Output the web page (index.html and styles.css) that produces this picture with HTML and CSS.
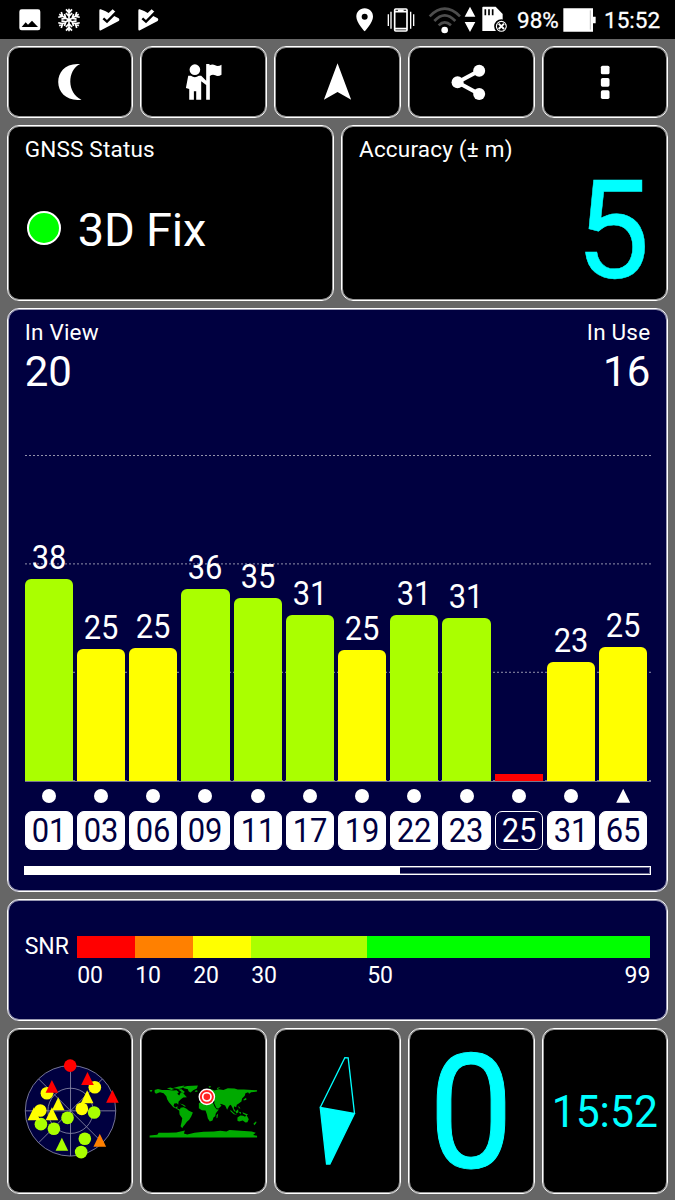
FILE: index.html
```
<!DOCTYPE html>
<html lang="en">
<head>
    <meta charset="UTF-8">
    <meta name="viewport" content="width=device-width, initial-scale=1.0">
    <title>GNSS Status</title>
    <link rel="stylesheet" href="styles.css">
</head>
<body>

    <header class="statusbar">
        <div class="notifications">
            <svg width="22" height="22" viewBox="56 26 66 66"><rect x="57" y="27" width="63" height="63" rx="7" fill="#fff"/><path d="M64 80 L76 66 L83 73 L95 61 L113 80 Z" fill="#000"/></svg>
            <svg width="26" height="24" viewBox="167 22 78 72" fill="none" stroke="#fff" stroke-width="5">
                <g id="arm"><path d="M206 58 V24 M197 26 L206 36 L215 26 M197 37 L206 47 L215 37"/></g>
                <use href="#arm" transform="rotate(60 206 58)"/>
                <use href="#arm" transform="rotate(120 206 58)"/>
                <use href="#arm" transform="rotate(180 206 58)"/>
                <use href="#arm" transform="rotate(240 206 58)"/>
                <use href="#arm" transform="rotate(300 206 58)"/>
            </svg>
            <svg class="check" width="21" height="22" viewBox="296 26 63 66"><g id="chk"><path d="M301 27 L316 33 L325 38 L337 27 L345 34 L336 44 L346 49 L355 54 Q359 58 355 62 L302 90 Q297 92 297 87 V31 Q297 26 301 27 Z" fill="#fff"/><path d="M309 54 L320 64 L347 37" fill="none" stroke="#000" stroke-width="7"/></g></svg>
            <svg class="check" width="21" height="22" viewBox="296 26 63 66"><use href="#chk"/></svg>
        </div>
        <div class="system">
            <svg class="pin" width="18" height="24" viewBox="62 24 54 72"><path fill="#fff" fill-rule="evenodd" d="M88 25 C73 25 63 36 63 50 C63 67 88 94 88 94 C88 94 113 67 113 50 C113 36 103 25 88 25 Z M88 41 A9 9 0 1 1 88 59 A9 9 0 1 1 88 41 Z"/></svg>
            <svg class="vibrate" width="28" height="24" viewBox="154 24 84 72" fill="none" stroke="#fff"><rect x="177" y="27" width="37" height="66" rx="3" stroke-width="5"/><path d="M177 35 H214 M187 31 H204 M177 86 H214" stroke-width="5"/><path d="M166 35 V86 M158 43 V78 M225 35 V86 M234 43 V78" stroke-width="4"/></svg>
            <svg class="wifi" width="34" height="28" viewBox="276 16 102 84" fill="none" stroke="#4d4d4d" stroke-width="8"><path d="M281 47 Q326 1 372 47"/><path d="M295 61 Q326 27 358 61"/><path d="M308 74 Q326 56 345 74"/><circle cx="326" cy="88" r="10" fill="#fff" stroke="none"/></svg>
            <svg class="arrows" width="12" height="27" viewBox="386 19 34 81" fill="#fff"><path d="M403 21 L419 51 H387 Z M387 67 H419 L403 97 Z"/></svg>
            <svg class="sdcard" width="27" height="27" viewBox="440 19 81 81"><path d="M443 21 H481 L502 43 V94 H441 V23 Z" fill="#fff"/><path d="M450 29 V47 M461 29 V47 M472 29 V47" stroke="#000" stroke-width="5"/><circle cx="498" cy="80" r="19" fill="#fff" stroke="#000" stroke-width="5"/><circle cx="498" cy="80" r="13" fill="#000"/><path d="M490 72 L506 88 M506 72 L490 88" stroke="#fff" stroke-width="6"/></svg>
            <span class="percent">98%</span>
            <svg class="battery" width="33" height="24" viewBox="686 23 99 72" fill="#fff"><path d="M687 24 H776 V49 H784 V69 H776 V94 H687 Z"/><path d="M768 30 V88" stroke="#999" stroke-width="2"/></svg>
            <span class="clock">15:52</span>
        </div>
    </header>

    <main class="dashboard">
        <nav class="row five">
            <button class="card"><svg viewBox="20 138 381 216"><path fill="#fff" d="M240 192 C196 188 174 215 174 246 C174 279 202 305 244 299 C200 280 200 211 240 192 Z"/></svg></button>
            <button class="card"><svg viewBox="420 138 381 216" fill="#fff"><circle cx="585" cy="209" r="16"/><path d="M565 227 H573 Q585 236 597 227 H604 L619 242 V192 H629 V196 Q638 191 646 196 Q655 200 665 194 V224 Q655 231 646 226 Q638 222 630 228 V299 H619 V255 L604 244 V299 H589 V274 H582 V299 H568 V267 L558 264 Z"/></svg></button>
            <button class="card"><svg viewBox="822 138 381 216"><path fill="#fff" d="M1013 190 L1054 299 L1013 276 L972 299 Z"/></svg></button>
            <button class="card"><svg viewBox="218 138 381 216" fill="#fff"><path d="M432 212 L367 247 L432 282" fill="none" stroke="#fff" stroke-width="12"/><circle cx="432" cy="212" r="18"/><circle cx="367" cy="247" r="18"/><circle cx="432" cy="282" r="18"/></svg></button>
            <button class="card"><svg viewBox="619 138 381 216" fill="#fff"><rect x="796" y="197" width="26" height="26" rx="5"/><rect x="796" y="234" width="26" height="26" rx="5"/><rect x="796" y="271" width="26" height="26" rx="5"/></svg></button>
        </nav>

        <section class="row two">
            <div class="card info">
                <div class="label">GNSS Status</div>
                <div class="fix"><span class="led"></span>3D Fix</div>
            </div>
            <div class="card info">
                <div class="label">Accuracy (± m)</div>
                <div class="accuracy">5</div>
            </div>
        </section>

        <section class="card navy signals">
            <div class="counts">
                <div><div class="label">In View</div><div class="count">20</div></div>
                <div class="right"><div class="label">In Use</div><div class="count">16</div></div>
            </div>
            <div class="chart" id="chart"></div>
            <div class="ids" id="ids"></div>
            <div class="scroll"><div class="thumb"></div></div>
        </section>

        <section class="card navy snr">
            <span class="snr-title">SNR</span>
            <div class="scale">
                <div class="red"></div><div class="orange"></div><div class="yellow"></div><div class="lime"></div><div class="green"></div>
                <span>00</span><span>10</span><span>20</span><span>30</span><span class="ends">50<b>99</b></span>
            </div>
        </section>

        <section class="row five">
            <div class="card">
                <svg viewBox="20 24 381 497">
                    <g fill="none" stroke="#8c8ca8" stroke-width="2.5">
                        <circle cx="211" cy="272" r="136" fill="#000040"/>
                        <circle cx="211" cy="272" r="68"/>
                        <path d="M211 136 V408 M75 272 H347 M115 176 L307 368 M115 368 L307 176"/>
                    </g>
                    <g id="sky"></g>
                </svg>
            </div>
            <div class="card">
                <svg viewBox="16 24 381 497">
                    <g fill="#0a0">
                        <path d="M45 210 L53 209 L52 214 L46 214 Z M60 209 L70 206 L82 209 L100 209 L116 211 L126 210 L133 216 L128 221 L134 226 L139 216 L145 218 L154 228 L157 231 L146 232 L139 237 L132 244 L131 254 L127 249 L119 250 L117 257 L122 262 L129 258 L128 265 L135 267 L140 274 L134 272 L126 266 L116 261 L109 253 L103 246 L98 238 L95 228 L87 219 L76 216 L64 221 L60 216 Z"/>
                        <path d="M97 204 L108 202 L119 206 L110 209 Z M116 203 L132 199 L150 196 L143 203 L133 206 Z M131 208 L141 207 L151 215 L146 219 L138 213 Z M145 200 L158 197 L190 196 L187 205 L176 210 L168 217 L162 213 L160 207 L148 204 Z M180 212 L187 210 L190 213 L184 215 Z"/>
                        <path d="M136 250 L146 253 L154 258 L151 260 Z M138 263 L147 261 L156 266 L163 272 L175 277 L170 289 L164 299 L157 305 L151 313 L146 319 L143 324 L138 318 L141 306 L143 294 L135 283 L134 274 Z"/>
                        <path d="M193 249 L201 244 L214 243 L226 247 L236 249 L240 259 L246 267 L253 268 L244 279 L242 288 L237 292 L234 301 L226 304 L220 295 L217 282 L213 271 L202 270 L193 264 Z M246 285 L251 280 L249 293 L246 294 Z"/>
                        <path d="M195 240 L198 232 L193 229 L197 222 L205 227 L210 216 L221 207 L230 207 L240 211 L252 207 L267 209 L280 204 L300 205 L310 208 L328 208 L368 210 L368 214 L350 216 L344 221 L341 216 L333 219 L331 227 L323 235 L321 244 L313 250 L307 254 L305 261 L299 258 L298 265 L304 273 L299 274 L294 263 L289 254 L284 257 L278 269 L272 256 L263 252 L256 251 L261 257 L252 265 L246 264 L239 249 L240 243 L229 242 L224 237 L219 240 L208 237 L202 242 Z M222 198 L230 198 L226 203 Z M247 203 L258 200 L249 207 Z"/>
                        <path d="M288 269 L300 280 L308 284 L298 282 L288 273 Z M303 274 L311 267 L312 276 L306 280 Z M313 275 L320 276 L318 282 Z M324 276 L341 283 L336 286 L326 281 Z M312 257 L318 265 L313 264 Z M327 238 L335 233 L336 239 L328 241 Z"/>
                        <path d="M309 292 L318 286 L326 287 L332 290 L336 284 L343 297 L339 306 L333 307 L325 301 L314 304 L309 302 Z M357 311 L365 303 L366 308 L360 315 Z"/>
                        <path d="M45 346 L68 344 L72 338 L100 338 L125 337 L151 331 L148 340 L158 343 L180 338 L207 335 L238 334 L257 332 L276 334 L285 330 L318 332 L352 334 L364 338 L356 345 L368 347 V352 H45 Z"/>
                    </g>
                    <circle cx="217" cy="230" r="25" fill="#fff"/>
                    <circle cx="217" cy="230" r="18" fill="none" stroke="#f22" stroke-width="6"/>
                    <circle cx="217" cy="230" r="10" fill="#f22"/>
                </svg>
            </div>
            <div class="card">
                <svg viewBox="12 24 381 497" stroke="#0ff" stroke-width="4"><path d="M151 262 L225 112 L235 113 L254 280" fill="none"/><path d="M151 262 L254 280 L180 432 L170 432 Z" fill="#0ff"/></svg>
            </div>
            <div class="card speed"><span>0</span></div>
            <div class="card time"><span>15:52</span></div>
        </section>
    </main>

    <script>
        // id, snr, bar height in px
        const satellites = [
            ['01', 38, 202], ['03', 25, 132], ['06', 25, 133], ['09', 36, 192],
            ['11', 35, 183], ['17', 31, 166], ['19', 25, 131], ['22', 31, 166],
            ['23', 31, 163], ['25', 0, 7], ['31', 23, 119], ['65', 25, 134]
        ];

        function color(snr) {
            if (snr < 10) return 'red';
            return snr < 30 ? 'yellow' : 'lime';
        }

        satellites.forEach(([id, snr, height]) => {
            document.getElementById('chart').innerHTML += `
                <div class="col">
                    <span>${snr || ''}</span>
                    <div class="bar ${color(snr)}" style="height: ${height}px"></div>
                </div>`;
            document.getElementById('ids').innerHTML += `
                <div class="sat">
                    <i class="${id > 64 ? 'triangle' : 'dot'}"></i>
                    <div class="chip ${snr ? '' : 'unused'}"><span>${id}</span></div>
                </div>`;
        });

        // c = circle (GPS), t = triangle (GLONASS)
        const sky = [
            ['c', 140, 219, '#ff0'], ['c', 284, 201, '#ff0'], ['c', 120, 271, '#ff0'], ['c', 245, 266, '#ff0'],
            ['c', 122, 312, '#af0'], ['c', 161, 326, '#af0'], ['c', 202, 293, '#af0'], ['c', 282, 277, '#af0'],
            ['c', 254, 356, '#af0'], ['c', 243, 396, '#af0'], ['c', 210, 136, '#f00'],
            ['t', 101, 281, '#ff0'], ['t', 155, 281, '#ff0'], ['t', 174, 251, '#ff0'], ['t', 261, 230, '#ff0'],
            ['t', 155, 199, '#f00'], ['t', 262, 175, '#f00'], ['t', 337, 229, '#f00'],
            ['t', 299, 361, '#ff8000'], ['t', 185, 373, '#af0']
        ];

        document.getElementById('sky').innerHTML = sky.map(([type, x, y, fill]) =>
            type === 'c'
                ? `<circle cx="${x}" cy="${y}" r="19" fill="${fill}"/>`
                : `<path d="M${x} ${y - 20} l19 39 h-38 z" fill="${fill}"/>`
        ).join('');
    </script>

</body>
</html>
```

FILE: styles.css
```
* {
    box-sizing: border-box;
}

body {
    margin: 0;
    height: 1200px;
    background: #666;
    color: #fff;
    font-family: Roboto, sans-serif;
}

svg {
    display: block;
    flex: none;
}

.statusbar {
    height: 39px;
    background: #000;
    display: flex;
    justify-content: space-between;
    padding: 0 13px 0 19px;
    font-size: 22.5px;
}

.notifications,
.system {
    display: flex;
    align-items: center;
}

.notifications {
    gap: 15px;
}

.notifications .check {
    margin-left: 2px;
}

.notifications .check + .check {
    margin-left: 3px;
}

.vibrate {
    margin-left: 13px;
}

.wifi {
    margin-left: 13px;
}

.arrows {
    margin-left: 2px;
}

.sdcard {
    margin-left: 6px;
}

.percent {
    margin: 1px 0 0 8px;
    width: 46px;
    -webkit-text-stroke: 0.3px #fff;
}

.clock {
    margin: 1px 0 0 8px;
    width: 58px;
    -webkit-text-stroke: 0.3px #fff;
}

.dashboard {
    display: grid;
    grid-template-rows: 72px 176.3px 584.3px 122.6px 165.7px;
    gap: 6.7px;
    padding: 7px 6.7px 0;
}

.row {
    display: grid;
    gap: 7px;
}

.five {
    grid-template-columns: repeat(5, 1fr);
}

.two {
    grid-template-columns: repeat(2, 1fr);
}

.card {
    min-width: 0;
    margin: 0;
    padding: 0;
    background: #000;
    border: 1px solid #fff;
    border-radius: 12px;
    box-shadow: inset 0 0 0 1px rgba(255, 255, 255, 0.6);
}

.card > svg {
    width: calc(100% + 2px);
    height: calc(100% + 2px);
    margin: -1px;
}

.navy {
    background: #000040;
}

.label {
    font-size: 22.5px;
    line-height: 26px;
    letter-spacing: 0.2px;
}

.info {
    padding: 10px 17px 0;
}

.fix {
    display: flex;
    align-items: center;
    gap: 17px;
    margin-top: 40px;
    font-size: 47px;
    line-height: 56px;
    letter-spacing: -0.2px;
}

.led {
    width: 34px;
    height: 34px;
    margin: 0 0 3px 2px;
    background: #0f0;
    border: 2px solid #fff;
    border-radius: 50%;
}

.accuracy {
    color: #0ff;
    font-size: 138px;
    line-height: 138px;
    text-align: right;
    transform: scaleX(0.96);
    transform-origin: 98% 50%;
    -webkit-text-stroke: 0.5px #0ff;
}

.signals {
    display: flex;
    flex-direction: column;
    padding: 10px 16px 0 17px;
}

.counts {
    display: flex;
    justify-content: space-between;
}

.right {
    padding-right: 1px;
    text-align: right;
}

.count {
    font-size: 42px;
    line-height: 50px;
    margin-top: 2px;
}

.chart,
.ids {
    display: grid;
    grid-template-columns: repeat(12, 1fr);
}

.chart {
    height: 327px;
    margin-top: 58px;
    border-bottom: 1px solid #77778f;
    background:
        repeating-linear-gradient(90deg, transparent 0 2px, #000040 2px 4px),
        linear-gradient(#9292aa 1px, transparent 1px) 0 0 / 100% 108.4px;
}

.col {
    display: flex;
    flex-direction: column;
    justify-content: flex-end;
    padding-right: 4px;
    text-align: center;
    font-size: 32.5px;
    line-height: 32px;
}

.col span {
    margin-bottom: 5px;
    transform: scaleX(0.95);
}

.bar {
    border-radius: 6px 6px 0 0;
}

.bar.red {
    border-radius: 0;
}

.red {
    background: #f00;
}

.orange {
    background: #ff8000;
}

.yellow {
    background: #ff0;
}

.lime {
    background: #af0;
}

.green {
    background: #0f0;
}

.sat {
    display: flex;
    flex-direction: column;
    align-items: center;
    padding: 7px 4px 0 0;
}

.dot {
    width: 14px;
    height: 14px;
    border-radius: 50%;
    background: #fff;
}

.triangle {
    width: 14px;
    height: 14px;
    background: #fff;
    clip-path: polygon(50% 0, 100% 100%, 0 100%);
}

.chip {
    width: 100%;
    height: 39px;
    margin-top: 8px;
    border: 1px solid #fff;
    border-radius: 7px;
    background: #fff;
    color: #000040;
    font-size: 32.5px;
    line-height: 39px;
    text-align: center;
}

.chip span {
    display: block;
    transform: scaleX(0.95);
}

.unused {
    background: none;
    color: #fff;
}

.scroll {
    height: 9px;
    margin: 16px 0 0 -1px;
    border: 1px solid #fff;
    box-shadow: inset 0 0 0 1px rgba(255, 255, 255, 0.4);
}

.thumb {
    width: 60%;
    height: 7px;
    background: #fff;
}

.snr {
    display: flex;
    padding: 36px 17px 0;
    font-size: 23px;
}

.snr-title {
    width: 52.5px;
    line-height: 22px;
}

.scale {
    flex: 1;
    display: grid;
    grid-template-columns: 58px 58px 58px 116px 1fr;
    grid-template-rows: 22px 36px;
    line-height: 36px;
}

.ends {
    display: flex;
    justify-content: space-between;
}

.ends b {
    font-weight: 400;
}

.speed,
.time {
    display: flex;
    align-items: center;
    justify-content: center;
    color: #0ff;
}

.speed {
    font-size: 160px;
    line-height: 160px;
}

.speed span {
    margin-top: 4px;
    transform: scaleX(0.94);
    -webkit-text-stroke: 1px #0ff;
}

.time {
    font-size: 44px;
}

.time span {
    margin-top: 2px;
    transform: scaleX(0.97);
}
```
